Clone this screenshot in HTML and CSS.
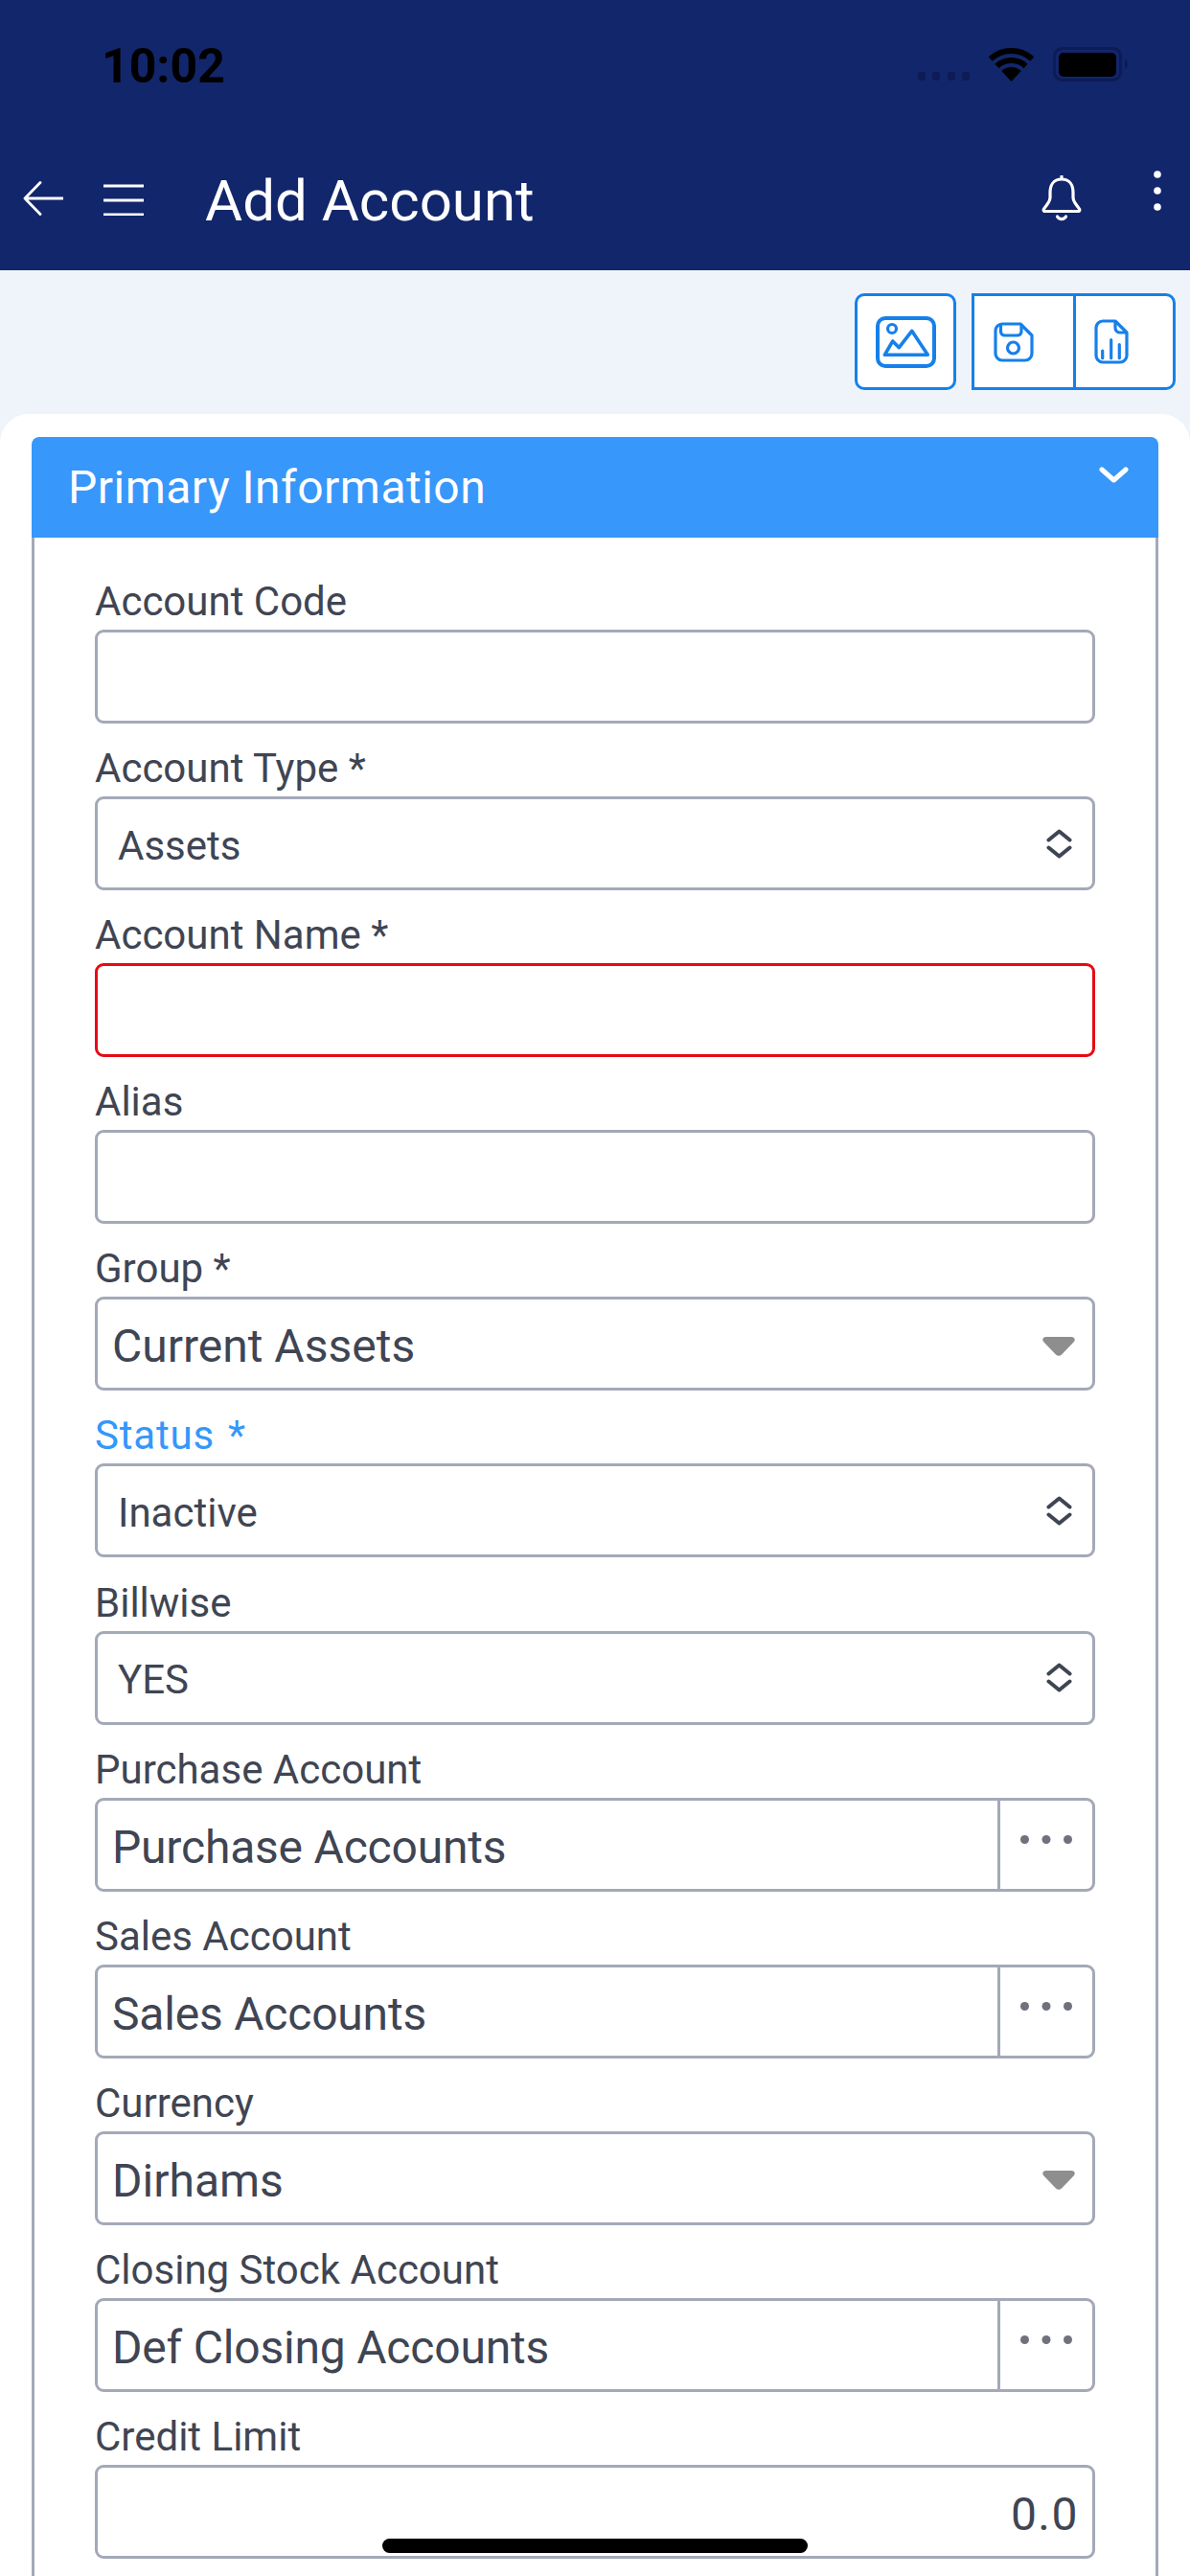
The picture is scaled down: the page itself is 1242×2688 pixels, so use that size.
FILE: index.html
```html
<!DOCTYPE html>
<html lang="en">
<head>
<meta charset="utf-8">
<title>Add Account</title>
<link rel="stylesheet" href="styles.css">
</head>
<body>
<div class="app">
  <header class="appbar">
    <div class="statusbar">
      <span class="time">10:02</span>
      <div class="status-icons">
        <svg class="signal" width="54" height="9" viewBox="0 0 54 9"><g fill="#0d1b56"><rect x="0" y="0" width="8" height="9" rx="3"/><rect x="15" y="0" width="8" height="9" rx="3"/><rect x="31" y="0" width="8" height="9" rx="3"/><rect x="46" y="0" width="8" height="9" rx="3"/></g></svg>
        <svg width="47" height="35" viewBox="0 0 47 35"><g fill="none" stroke="#000" stroke-width="6"><path d="M1.7 11.6A32 32 0 0 1 45.3 11.6"/><path d="M8.5 19A22 22 0 0 1 38.5 19"/></g><path d="M23.5 35L13.3 24A15 15 0 0 1 33.7 24Z" fill="#000"/></svg>
        <svg width="78" height="36" viewBox="0 0 78 36"><rect x="1.5" y="1.5" width="69" height="33" rx="8" fill="none" stroke="#0d1b56" stroke-width="3"/><rect x="6" y="6" width="60" height="25" rx="5" fill="#000"/><path d="M75 13c2 .5 3 2.500 3 5s-1 4.500-3 5z" fill="#0d1b56"/></svg>
      </div>
    </div>
    <nav class="navbar">
      <svg class="nav-back" width="42" height="36" viewBox="0 0 42 36"><path d="M18 1.500L2 18L18 34.500M2 18H42" fill="none" stroke="#fff" stroke-width="2.800" stroke-linecap="round" stroke-linejoin="round"/></svg>
      <svg class="nav-menu" width="42" height="33" viewBox="0 0 42 33"><path d="M0 2H42M0 17H42M0 32H42" fill="none" stroke="#fff" stroke-width="3"/></svg>
      <h1 class="nav-title">Add Account</h1>
      <svg class="nav-bell" width="42" height="48" viewBox="0 0 42 48"><g fill="none" stroke="#fff" stroke-width="3.200" stroke-linecap="round" stroke-linejoin="round"><path d="M21 4C12 4 9 11 9 18V23C9 28 5 31 2.500 35C1.500 37 3 37.500 4 37.500H38C39 37.500 40.500 37 39.500 35C37 31 33 28 33 23V18C33 11 30 4 21 4ZM21 1V4"/><path d="M16.500 43C18.500 46.500 23.500 46.500 25.500 43"/></g></svg>
      <svg class="nav-more" width="8" height="42" viewBox="0 0 8 42"><g fill="#fff"><circle cx="4" cy="4" r="3.800"/><circle cx="4" cy="21" r="3.800"/><circle cx="4" cy="38" r="3.800"/></g></svg>
    </nav>
  </header>

  <div class="toolbar">
    <button class="tool tool--image" type="button">
      <svg width="63" height="54" viewBox="0 0 63 54"><g fill="none" stroke="#1680ea" stroke-linejoin="round"><rect x="2" y="2" width="59" height="50" rx="8" stroke-width="4"/><circle cx="17" cy="13" r="4.500" stroke-width="3.200"/><path d="M9.300 40.300H54.300L37.700 15.300L24.300 32.700L17.700 26Z" stroke-width="3.600"/></g></svg>
    </button>
    <div class="tool-group">
      <button class="tool tool--save" type="button">
        <svg width="42" height="42" viewBox="0 0 42 42"><g fill="none" stroke="#1680ea" stroke-width="3.200" stroke-linejoin="round"><path d="M9 2H28L40 14V33A7 7 0 0 1 33 40H9A7 7 0 0 1 2 33V9A7 7 0 0 1 9 2Z"/><path d="M7.500 2V10A4 4 0 0 0 11.500 14H25A4 4 0 0 0 29 10V2"/><circle cx="20.500" cy="27" r="6"/></g></svg>
      </button>
      <button class="tool tool--report" type="button">
        <svg width="36" height="48" viewBox="0 0 36 48"><g fill="none" stroke="#1680ea" stroke-width="3.200" stroke-linejoin="round"><path d="M9 2H22L34 14V38A7 7 0 0 1 27 45H9A7 7 0 0 1 2 38V9A7 7 0 0 1 9 2Z"/><path d="M22 2V9A5 5 0 0 0 27 14H34"/><path d="M8.700 33V40.700M17.700 21.700V40.700M26.300 26.700V40.700" stroke-linecap="round"/></g></svg>
      </button>
    </div>
  </div>

  <main class="sheet">
    <section class="panel">
      <div class="panel-head">
        <h2 class="panel-title">Primary Information</h2>
        <svg class="panel-chevron" width="31" height="17" viewBox="0 0 31 17"><path d="M3 3L15.500 14L28 3" fill="none" stroke="#fff" stroke-width="5" stroke-linecap="round" stroke-linejoin="round"/></svg>
      </div>
      <div class="panel-body">
        <div class="field">
          <div class="label">Account Code</div>
          <div class="control"></div>
        </div>
        <div class="field">
          <div class="label">Account Type *</div>
          <div class="control control--select"><span class="value">Assets</span>
            <svg width="27" height="31" viewBox="0 0 27 31"><path d="M2.500 11.500L13.500 2.500L24.500 11.500M2.500 19.500L13.500 28.500L24.500 19.500" fill="none" stroke="#3f4553" stroke-width="4" stroke-linecap="round" stroke-linejoin="round"/></svg>
          </div>
        </div>
        <div class="field">
          <div class="label">Account Name *</div>
          <div class="control control--error"></div>
        </div>
        <div class="field">
          <div class="label">Alias</div>
          <div class="control"></div>
        </div>
        <div class="field">
          <div class="label">Group *</div>
          <div class="control control--dropdown"><span class="value">Current Assets</span>
            <svg width="34" height="20" viewBox="0 0 34 20"><path d="M4 0H30C33.500 0 35 3 32.500 5.500L20 18.500C18.300 20.300 15.700 20.300 14 18.500L1.500 5.500C-1 3 .5 0 4 0Z" fill="#8e8e8e"/></svg>
          </div>
        </div>
        <div class="field">
          <div class="label label--active">Status *</div>
          <div class="control control--select"><span class="value">Inactive</span>
            <svg width="27" height="31" viewBox="0 0 27 31"><path d="M2.500 11.500L13.500 2.500L24.500 11.500M2.500 19.500L13.500 28.500L24.500 19.500" fill="none" stroke="#3f4553" stroke-width="4" stroke-linecap="round" stroke-linejoin="round"/></svg>
          </div>
        </div>
        <div class="field">
          <div class="label">Billwise</div>
          <div class="control control--select"><span class="value">YES</span>
            <svg width="27" height="31" viewBox="0 0 27 31"><path d="M2.500 11.500L13.500 2.500L24.500 11.500M2.500 19.500L13.500 28.500L24.500 19.500" fill="none" stroke="#3f4553" stroke-width="4" stroke-linecap="round" stroke-linejoin="round"/></svg>
          </div>
        </div>
        <div class="field">
          <div class="label">Purchase Account</div>
          <div class="control control--lookup"><span class="value">Purchase Accounts</span>
            <div class="addon"><svg width="54" height="9" viewBox="0 0 54 9"><g fill="#6f717c"><circle cx="4.500" cy="4.500" r="4.500"/><circle cx="27" cy="4.500" r="4.500"/><circle cx="49.500" cy="4.500" r="4.500"/></g></svg></div>
          </div>
        </div>
        <div class="field">
          <div class="label">Sales Account</div>
          <div class="control control--lookup"><span class="value">Sales Accounts</span>
            <div class="addon"><svg width="54" height="9" viewBox="0 0 54 9"><g fill="#6f717c"><circle cx="4.500" cy="4.500" r="4.500"/><circle cx="27" cy="4.500" r="4.500"/><circle cx="49.500" cy="4.500" r="4.500"/></g></svg></div>
          </div>
        </div>
        <div class="field">
          <div class="label">Currency</div>
          <div class="control control--dropdown"><span class="value">Dirhams</span>
            <svg width="34" height="20" viewBox="0 0 34 20"><path d="M4 0H30C33.500 0 35 3 32.500 5.500L20 18.500C18.300 20.300 15.700 20.300 14 18.500L1.500 5.500C-1 3 .5 0 4 0Z" fill="#8e8e8e"/></svg>
          </div>
        </div>
        <div class="field">
          <div class="label">Closing Stock Account</div>
          <div class="control control--lookup"><span class="value">Def Closing Accounts</span>
            <div class="addon"><svg width="54" height="9" viewBox="0 0 54 9"><g fill="#6f717c"><circle cx="4.500" cy="4.500" r="4.500"/><circle cx="27" cy="4.500" r="4.500"/><circle cx="49.500" cy="4.500" r="4.500"/></g></svg></div>
          </div>
        </div>
        <div class="field">
          <div class="label">Credit Limit</div>
          <div class="control control--number"><span class="value">0.0</span></div>
        </div>
      </div>
    </section>
  </main>

  <div class="home-indicator"></div>
</div>
</body>
</html>
```
FILE: styles.css
```css
* { box-sizing: border-box; }
html, body { margin: 0; padding: 0; }
body {
  width: 1242px;
  height: 2688px;
  overflow: hidden;
  background: #eff4fb;
  font-family: Roboto, "Liberation Sans", sans-serif;
  color: #3f4553;
}
.app {
  position: relative;
  width: 1242px;
  height: 2688px;
  display: flex;
  flex-direction: column;
  overflow: hidden;
}

/* App bar */
.appbar { height: 282px; background: #12266b; display: flex; flex-direction: column; flex: none; }
.statusbar {
  height: 132px;
  padding: 49px 65px 0 106px;
  display: flex;
  justify-content: space-between;
  align-items: flex-start;
}
.time { font-size: 50px; line-height: 40px; font-weight: 700; color: #000; letter-spacing: 0; }
.status-icons { display: flex; align-items: flex-end; gap: 20px; height: 36px; }
.signal { margin-bottom: 1px; }
.navbar { height: 150px; padding-left: 24px; display: flex; align-items: center; color: #fff; }
.nav-menu { margin-left: 42px; margin-top: 2px; }
.nav-title { margin: 0 0 0 64px; padding-top: 5px; font-size: 60px; line-height: 70px; font-weight: 400; color: #fff; }
.nav-bell { margin-left: auto; margin-right: 1px; }
.nav-more { margin-left: 74px; margin-bottom: 16px; margin-right: 30px; }

/* Toolbar */
.toolbar { height: 150px; flex: none; padding: 24px 15px 0 0; display: flex; justify-content: flex-end; align-items: flex-start; gap: 16px; }
.tool {
  height: 101px;
  padding: 0;
  background: #fff;
  border: 3px solid #1680ea;
  display: flex;
  align-items: center;
  font: inherit;
}
.tool--image { width: 106px; border-radius: 10px; justify-content: center; }
.tool-group { display: flex; }
.tool--save { width: 109px; padding-left: 20px; }
.tool--report { width: 107px; margin-left: -3px; padding-left: 19px; border-radius: 0 10px 10px 0; }

/* Sheet and panel */
.sheet { flex: 1; background: #fff; border-radius: 30px 30px 0 0; padding: 24px 33px 0; display: flex; flex-direction: column; min-height: 0; }
.panel { flex: 1; display: flex; flex-direction: column; min-height: 0; }
.panel-head {
  height: 105px;
  flex: none;
  background: #3797fb;
  border-radius: 8px 8px 0 0;
  padding: 0 31px 0 38px;
  display: flex;
  justify-content: space-between;
  align-items: center;
}
.panel-title { margin: 0; font-size: 48px; line-height: 60px; font-weight: 400; color: #fff; letter-spacing: .48px; }
.panel-chevron { align-self: flex-start; margin-top: 31px; }
.panel-body {
  flex: 1;
  border-left: 3px solid #a4a9b8;
  border-right: 3px solid #a4a9b8;
  padding: 33px 63px 0;
}

/* Fields */
.field { margin-bottom: 13.1px; }
.label { height: 63px; font-size: 42px; line-height: 67px; color: #3f4553; white-space: nowrap; }
.label--active { color: #3497fb; letter-spacing: .8px; word-spacing: 3px; }
.control {
  height: 98px;
  border: 3px solid #a4a9b8;
  border-radius: 9px;
  background: #fff;
  display: flex;
  align-items: center;
  justify-content: space-between;
  white-space: nowrap;
}
.value { color: #3f4553; }
.control--error { border-color: #e60a14; }
.control--select { font-size: 42px; padding: 4px 21px 0 21px; }
.control--select svg { margin-top: -4px; }
.control--dropdown { font-size: 48px; padding: 5px 18px 0 15px; }
.control--lookup { font-size: 48px; padding: 5px 0 0 15px; letter-spacing: -.2px; }
.control--number { font-size: 48px; padding: 5px 14px 0 15px; justify-content: flex-end; letter-spacing: 1.5px; }
.addon {
  align-self: stretch;
  width: 99px;
  margin-top: -5px;
  border-left: 3px solid #a4a9b8;
  padding-bottom: 10px;
  display: flex;
  align-items: center;
  justify-content: center;
}

/* Home indicator */
.home-indicator {
  position: absolute;
  left: 399px;
  top: 2649px;
  width: 444px;
  height: 15px;
  border-radius: 8px;
  background: #000;
}
```
